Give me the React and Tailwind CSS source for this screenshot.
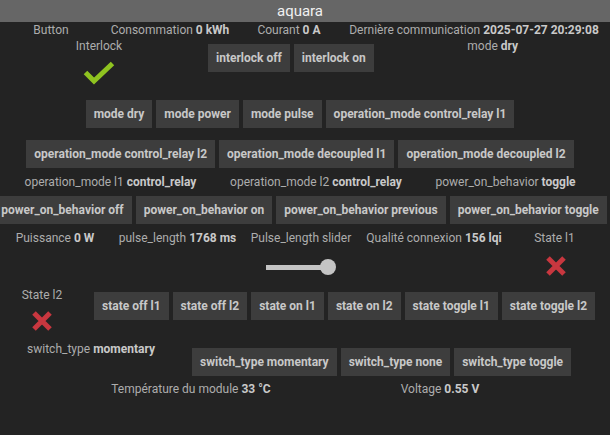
import React from "react";

function Btn({ children }) {
  return (
    <div className="h-7 px-2 shrink-0 flex items-center bg-[#3d3d3d] text-[12px] leading-none font-bold text-[#c8c8c8] whitespace-nowrap">
      {children}
    </div>
  );
}

function Lbl({ name, value, className = "" }) {
  return (
    <div className={"shrink-0 text-center whitespace-nowrap text-[12px] leading-4 text-[#adadad] " + className}>
      {name}
      {value !== undefined && (
        <>
          {" "}
          <span className="font-bold text-[#c9c9c9]">{value}</span>
        </>
      )}
    </div>
  );
}

function Check() {
  return (
    <svg width="32" height="24" viewBox="0 0 32 24">
      <polyline points="2.5,11.5 11,20 29.5,2.5" fill="none" stroke="#8fc320" strokeWidth="5" />
    </svg>
  );
}

function Cross() {
  return (
    <svg width="22" height="22" viewBox="0 0 22 22">
      <path d="M3 3 L19 19 M19 3 L3 19" fill="none" stroke="#c8373f" strokeWidth="5" />
    </svg>
  );
}

export default function App() {
  return (
    <div className="w-[610px] h-[435px] bg-[#232323] overflow-hidden font-['Roboto',sans-serif]">
      <div className="h-[22px] bg-[#666666] pr-[10px] flex items-center justify-center text-[15px] text-[#f0f0f0]">
        aquara
      </div>
      <div className="w-[600px] flex flex-col">
        {/* row 1 */}
        <div className="flex h-4">
          <Lbl name="Button" className="w-[102px]" />
          <Lbl name="Consommation" value="0 kWh" className="w-[136px]" />
          <Lbl name="Courant" value="0 A" className="w-[102px]" />
          <Lbl name="Dernière communication" value="2025-07-27 20:29:08" className="w-[268px]" />
        </div>
        {/* row 2 */}
        <div className="flex h-[62px] items-start">
          <div className="w-[198px] shrink-0 flex flex-col items-center">
            <Lbl name="Interlock" />
            <div className="mt-[7px]">
              <Check />
            </div>
          </div>
          <div className="ml-[10px] mt-[6px] shrink-0 flex gap-1">
            <Btn>interlock off</Btn>
            <Btn>interlock on</Btn>
          </div>
          <Lbl name="mode" value="dry" className="w-[238px]" />
        </div>
        {/* row 3 */}
        <div className="flex justify-center gap-1">
          <Btn>mode dry</Btn>
          <Btn>mode power</Btn>
          <Btn>mode pulse</Btn>
          <Btn>operation_mode control_relay l1</Btn>
        </div>
        {/* row 4 */}
        <div className="flex justify-center gap-1 mt-3">
          <Btn>operation_mode control_relay l2</Btn>
          <Btn>operation_mode decoupled l1</Btn>
          <Btn>operation_mode decoupled l2</Btn>
        </div>
        {/* row 5 */}
        <div className="flex h-4 mt-[6px]">
          <Lbl name="operation_mode l1" value="control_relay" className="w-[221px]" />
          <Lbl name="operation_mode l2" value="control_relay" className="w-[190px]" />
          <Lbl name="power_on_behavior" value="toggle" className="w-[189px]" />
        </div>
        {/* row 6 */}
        <div className="flex justify-center gap-1 mt-[6px]">
          <Btn>power_on_behavior off</Btn>
          <Btn>power_on_behavior on</Btn>
          <Btn>power_on_behavior previous</Btn>
          <Btn>power_on_behavior toggle</Btn>
        </div>
        {/* row 7 */}
        <div className="flex h-[57px] mt-[6px] items-start">
          <Lbl name="Puissance" value="0 W" className="w-[110px]" />
          <Lbl name="pulse_length" value="1768 ms" className="w-[135px]" />
          <div className="w-[112px] shrink-0 flex flex-col items-center">
            <Lbl name="Pulse_length slider" />
            <div className="mt-[13px] w-[70px] h-[16px] flex items-center">
              <div className="flex-1 h-[5px] bg-[#c4c4c4]" />
              <div className="w-4 h-4 -ml-[2px] rounded-full bg-[#c4c4c4]" />
            </div>
          </div>
          <Lbl name="Qualité connexion" value="156 lqi" className="w-[154px]" />
          <div className="w-[87px] shrink-0 flex flex-col items-center">
            <Lbl name="State l1" />
            <div className="mt-[9px] ml-[2px]">
              <Cross />
            </div>
          </div>
        </div>
        {/* row 8 */}
        <div className="flex h-[54px] items-start">
          <div className="w-[84px] shrink-0 flex flex-col items-center">
            <Lbl name="State l2" />
            <div className="mt-[7px]">
              <Cross />
            </div>
          </div>
          <div className="ml-[10px] mt-[5px] shrink-0 flex gap-1">
            <Btn>state off l1</Btn>
            <Btn>state off l2</Btn>
            <Btn>state on l1</Btn>
            <Btn>state on l2</Btn>
            <Btn>state toggle l1</Btn>
            <Btn>state toggle l2</Btn>
          </div>
        </div>
        {/* row 9 */}
        <div className="flex h-[40px] items-start">
          <Lbl name="switch_type" value="momentary" className="w-[182px]" />
          <div className="ml-[10px] mt-[7px] shrink-0 flex gap-1">
            <Btn>switch_type momentary</Btn>
            <Btn>switch_type none</Btn>
            <Btn>switch_type toggle</Btn>
          </div>
        </div>
        {/* row 10 */}
        <div className="flex h-4">
          <Lbl name="Température du module" value="33 °C" className="w-[382px]" />
          <Lbl name="Voltage" value="0.55 V" className="w-[116px]" />
        </div>
      </div>
    </div>
  );
}
